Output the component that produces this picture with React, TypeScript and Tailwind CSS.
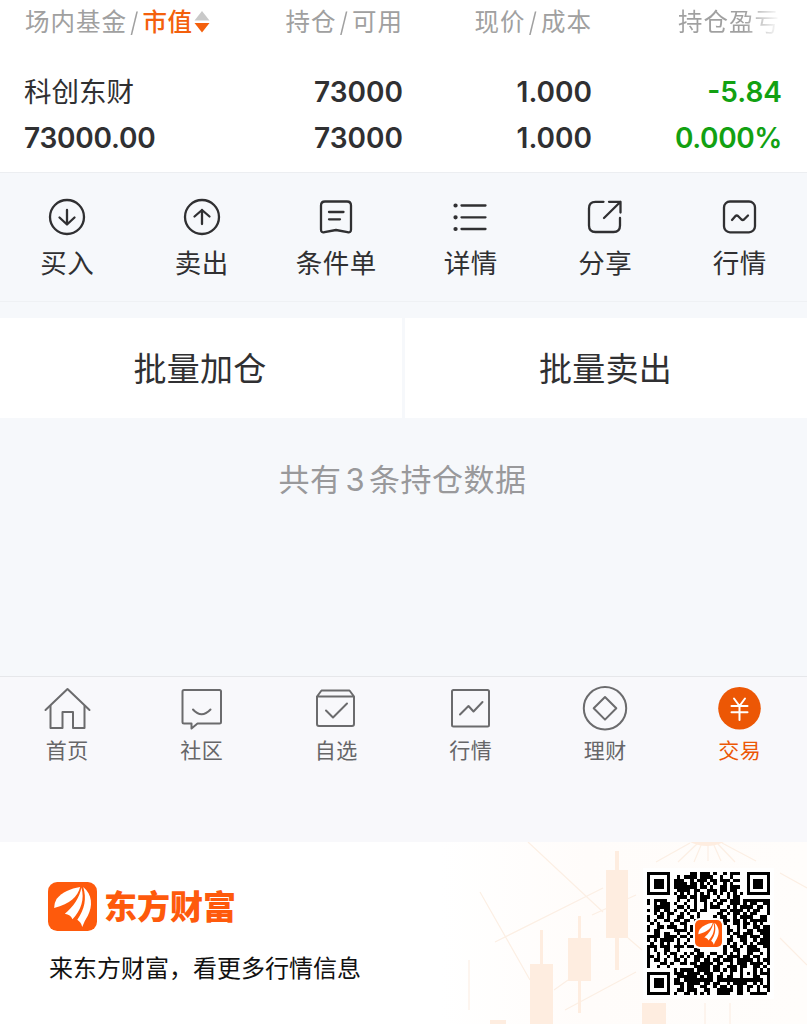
import React from "react";

const cjk = "font-['Inter','Noto_Sans_CJK_SC',sans-serif]";

const actions = [
  {
    label: "买入",
    icon: (
      <>
        <circle cx="20" cy="20" r="17" />
        <path d="M20 13v14M12.500 20.500 20 27.500l7.500-7" />
      </>
    ),
  },
  {
    label: "卖出",
    icon: (
      <>
        <circle cx="20" cy="20" r="17" />
        <path d="M20 27V13M12.500 19.500 20 13l7.500 6.500" />
      </>
    ),
  },
  {
    label: "条件单",
    icon: (
      <>
        <path d="M9 4.500h22q4 0 4 4v24q0 3.500-3.500 2.700L20 33l-11.500 2.200Q5 36 5 32.500v-24q0-4 4-4z" />
        <path d="M13 15h14.500M13 22.300h11" />
      </>
    ),
  },
  {
    label: "详情",
    icon: (
      <>
        <path d="M10.500 8.500h24M10.500 20.300h24M10.500 32h24" />
        <path d="M4.500 8.500h.1M4.500 20.300h.1M4.500 32h.1" strokeWidth="4.200" />
      </>
    ),
  },
  {
    label: "分享",
    icon: (
      <>
        <path d="M18.500 4.800H10.500q-6.500 0-6.500 6.500v17.200q0 6.500 6.500 6.500h18q6.500 0 6.500-6.500V21" />
        <path d="M24 4.800H35.500V15.500M35.500 4.800 19 21" />
      </>
    ),
  },
  {
    label: "行情",
    icon: (
      <>
        <rect x="4" y="4.500" width="31" height="30.800" rx="6" />
        <path d="m12 23 3.500-4q1.200-1 2.500 0l3.500 3.500q1.200 1 2.500 0l4-4" />
      </>
    ),
  },
];

const tabs = [
  {
    label: "首页",
    icon: (
      <>
        <path d="M2.500 24 24.500 3 46.500 24" />
        <path d="M7.500 20v22h12V26h10.500v16H41.500V20" />
      </>
    ),
  },
  {
    label: "社区",
    icon: (
      <>
        <path d="M6 4h35.500q1.500 0 1.500 1.500v30.500q0 1.500-1.500 1.500H19.500l-6 5v-5H6q-1.500 0-1.500-1.500V5.500Q4.500 4 6 4z" />
        <path d="M15 23.500q8.500 9.500 17.500 0" />
      </>
    ),
  },
  {
    label: "自选",
    icon: (
      <>
        <path d="M5 10.500 9.500 4.500h28l4.500 6zV38q0 2 2 2h33q2 0 2-2V10.500" />
        <path d="m14 24.500 7 7 14-14" />
      </>
    ),
  },
  {
    label: "行情",
    icon: (
      <>
        <rect x="5" y="4" width="37" height="36.500" rx="1.500" />
        <path d="m13 28.500 8.500-8.500 5 5.500 9-9.500" />
      </>
    ),
  },
  {
    label: "理财",
    icon: (
      <>
        <circle cx="24" cy="22.300" r="21.200" />
        <path d="m24 11 11.300 11.300L24 33.600 12.700 22.300z" />
      </>
    ),
  },
  {
    label: "交易",
    active: true,
    icon: (
      <>
        <circle cx="23.500" cy="22.300" r="21.300" fill="#ec5705" stroke="none" />
        <path d="m18 12.500 5.500 7.500 5.500-7.500M23.500 20v14M15.500 20h16M15.500 26.300h16" stroke="#fff" strokeWidth="2" />
      </>
    ),
  },
];

const qrRows = [
  "#######......##.###.#..#.###..#######",
  "#.....#..#.####.####..#..#....#.....#",
  "#.###.#.###..#.###.##.###.##..#.###.#",
  "#.###.#.####.##.#.#.#..#.#....#.###.#",
  "#.###.#.#######.##.#..##.###..#.###.#",
  "#.....#..####.##..###.##.##...#.....#",
  "#######.#.#.#.#.#.#.#.#.#.#.#.#######",
  ".........###.##.###..#..#.##.........",
  "#.####...#..#.#.##..#.##.###.########",
  "#.#.###.#..#..#..#.#.##..###.#.##..##",
  "..#####..##.#.#..#.###..#.#.####.##.#",
  "#.##.##.#..#.##.##....##.####.#.##..#",
  "..#.#.##..#.#..#.....##.#.##.#.##...#",
  "#..##.#..##..#.#....#.##..#.####..##.",
  "#.#..##.##.##.#........##.##.#.#####.",
  ".#.#...#..##..#........#..##.##.#.#..",
  "#..##.###..#.##.........#..#.#..##.##",
  "#.##....####.#..........##.#..##.####",
  "..##.##..#..#.#.........#.##.###..###",
  "####.####.##.##..........#.###.###.##",
  "#.#.####.#..#.#.........##..##..#.###",
  ".#..#.#..#.#..#.........#.#..#.#.####",
  "###.###.###.##.........#.##.#.###..##",
  "#.#..##..#....##.......#..##..####..#",
  "#..#.#.##..#.#.##..##..#.#.#..##..#.#",
  "##.#..#.#.#.#.###.#..##.####.##.##..#",
  "#.##.#..##.#..##.##.##.###.#####.#.##",
  "#...##.#..##.##.####.##..#.###.####.#",
  "#..#..#.......#####.##..###.##..##.#.",
  "........#.####.####.##.#.##.#...#.#.#",
  "#######.###.####.###..#..#..#.#.#.###",
  "#.....#..######.#.##.##.##..#...##..#",
  "#.###.#.##.#########.##############.#",
  "#.###.#.###.####.##.##..#.####..#.#.#",
  "#.###.#...#.##..##..#.##.#.##.##.#.##",
  "#.....#..##.###..##..#####.##.#..#..#",
  "#######.#..##.#.#.#..####..##..#####.",
];

const LogoMark = ({ className }: { className: string }) => (
  <svg viewBox="0 0 48 48" className={className}>
    <rect width="48" height="48" rx="9" fill="#fe5a0c" />
    <g fill="#fff">
      <path d="M8.500 16.500C14 10 22 6.500 31.500 5 29 14.500 22 21.500 6 25.500q0-5 2.500-9z" />
      <path d="M32.700 5.500C36 16.500 32.500 28 24 36.500c-1.500-3-3.500-4.700-7.500-5.300C25 24 31 15.500 32.700 5.500z" />
      <path d="M34.500 5C43.500 12 44 24 39 33q-3.500 5.500-5.500 11-1-4.500-4.800-7C36 27 38 16 34.500 5z" />
    </g>
  </svg>
);

const Slash = () => <span className="mx-[3px] inline-block scale-y-110 font-light">/</span>;

const HoldingsTable = () => (
  <section className="h-[173px] border-b border-[#eceef1] bg-white pl-[25px]">
    <div className="flex h-[44px] items-center text-[24.500px] tracking-[1px] text-[#a0a0a0]">
      <div className="flex w-[189px] items-center whitespace-nowrap">
        场内基金
        <Slash />
        <span className="font-medium tracking-[0.500px] text-[#f4600c]">市值</span>
        <svg viewBox="0 0 16 24" className="ml-px h-6 w-4 shrink-0">
          <path d="m8 1 7.500 9.500H.5z" fill="#c9c9c9" />
          <path d="M.5 13h15L8 22.500z" fill="#f4600c" />
        </svg>
      </div>
      <div className="w-[189px] text-right">
        持仓
        <Slash />
        可用
      </div>
      <div className="w-[189px] text-right">
        现价
        <Slash />
        成本
      </div>
      <div className="ml-[86px] w-[102px] overflow-hidden bg-linear-to-r from-[#a0a0a0] from-65% to-white bg-clip-text whitespace-nowrap text-transparent">
        持仓盈亏
      </div>
    </div>
    <div className="mt-[25px] grid grid-cols-[189px_189px_189px_190px] text-[28px] leading-[46px] font-semibold text-[#303032]">
      <div className="-ml-px text-[27.500px] font-normal">科创东财</div>
      <div className="text-right">73000</div>
      <div className="text-right">1.000</div>
      <div className="text-right text-[#12a112]">-5.84</div>
      <div className="-ml-px tracking-[-0.200px]">73000.00</div>
      <div className="text-right">73000</div>
      <div className="text-right">1.000</div>
      <div className="text-right tracking-[-0.400px] text-[#12a112]">0.000%</div>
    </div>
  </section>
);

const ActionBar = () => (
  <section className="grid h-[129px] grid-cols-6 border-b border-[#eff1f4] pt-[24px]">
    {actions.map((action) => (
      <div key={action.label} className="flex flex-col items-center">
        <svg
          viewBox="0 0 40 40"
          className="size-10 fill-none stroke-[#303032]"
          strokeWidth="2.300"
          strokeLinecap="round"
          strokeLinejoin="round"
        >
          {action.icon}
        </svg>
        <span className="mt-[6px] text-[26.500px] leading-10 tracking-[0.500px] text-[#303032]">{action.label}</span>
      </div>
    ))}
  </section>
);

const TabBar = () => (
  <nav className="grid h-[166px] grid-cols-6 border-t border-[#e6e7ea] bg-[#f8f8fb] pt-[9px]">
    {tabs.map((tab) => (
      <div key={tab.label} className="flex flex-col items-center">
        <svg
          viewBox="0 0 48 45"
          className="h-[45px] w-12 fill-none stroke-[#6b6b6d]"
          strokeWidth="2"
          strokeLinecap="round"
          strokeLinejoin="round"
        >
          {tab.icon}
        </svg>
        <span className={`mt-[4px] text-[21px] leading-8 tracking-[0.500px] ${tab.active ? "text-[#ec5705]" : "text-[#666668]"}`}>
          {tab.label}
        </span>
      </div>
    ))}
  </nav>
);

const ChartBackdrop = () => (
  <svg viewBox="440 842 367 182" className="absolute top-0 right-0 h-[182px] w-[367px]">
    <defs>
      <linearGradient id="wash" x1="0" x2="1">
        <stop offset="0" stopColor="#fff" />
        <stop offset="0.400" stopColor="#fffcfa" />
        <stop offset="1" stopColor="#fffdfb" />
      </linearGradient>
    </defs>
    <rect x="440" y="842" width="367" height="182" fill="url(#wash)" />
    <g stroke="#fcefe4" strokeWidth="1.200" fill="none">
      <path d="M528 842 603 912M480 892 530 980M495 942 603 888M565 1010 636 972M554 990 568 980M592 915 636 895M628 938 642 950M780 873 807 888M780 938 807 965" />
      <path d="m690 843-34 19M698 843l-20 19M702 843l-8 19M708 843v18M713 843l8 18M717 843l18 19M722 843l34 18" />
      <path d="M469 960v50M705 1003v21M730 1003v21" />
    </g>
    <path d="M690 842h34q-17 8-34 0z" fill="#feede0" />
    <g fill="#feede0">
      <path d="M606 870h22v68h-22zM568 938h23v43h-23zM530 964h23v60h-23zM642 1003h24v21h-24zM490 1020h16v4h-16z" />
      <path d="M615 851h4v119h-4zM578 916h3v97h-3zM540 930h3v34h-3z" />
    </g>
  </svg>
);

const QrCode = () => (
  <div className="relative size-[131px] bg-white p-[4px]">
    <svg viewBox="0 0 37 37" className="size-[123px]" shapeRendering="crispEdges">
      <path
        fill="#000"
        d={qrRows
          .flatMap((row, y) => [...row].map((cell, x) => (cell === "#" ? `M${x} ${y}h1v1h-1z` : "")))
          .join("")}
      />
    </svg>
    <div className="absolute top-[50px] left-[50px] rounded-[7px] bg-white p-[2px]">
      <LogoMark className="size-[27px]" />
    </div>
  </div>
);

const Footer = () => (
  <footer className="relative flex h-[182px] justify-between bg-white">
    <ChartBackdrop />
    <div className="relative pt-[40px] pl-[48px]">
      <div className="flex items-center gap-[7px]">
        <LogoMark className="size-[49px]" />
        <span className="text-[33px] leading-[48px] font-black text-[#fe5a0c]">东方财富</span>
      </div>
      <p className="mt-[20px] ml-px text-[24px] leading-9 text-[#111]">来东方财富，看更多行情信息</p>
    </div>
    <div className="relative pt-[26px] pr-[33px]">
      <QrCode />
    </div>
  </footer>
);

const App = () => {
  return (
    <div className={`h-[1024px] w-[807px] overflow-hidden bg-[#f6f8fb] ${cjk}`} lang="zh-CN">
      <HoldingsTable />
      <ActionBar />
      <div className="mt-4 grid h-[100px] grid-cols-2 gap-[3px] text-[33px] leading-[100px] tracking-[0.300px] text-[#303032]">
        <button className="bg-white pt-[3px] pr-[2px] leading-[97px]">批量加仓</button>
        <button className="bg-white pt-[3px] pr-px leading-[97px]">批量卖出</button>
      </div>
      <p className="h-[258px] pt-[37px] pr-[2px] text-center text-[31px] leading-[50px] tracking-[0.500px] text-[#99999b]">
        共有<span className="mx-[4px]">3</span>条持仓数据
      </p>
      <TabBar />
      <Footer />
    </div>
  );
};

export default App;
